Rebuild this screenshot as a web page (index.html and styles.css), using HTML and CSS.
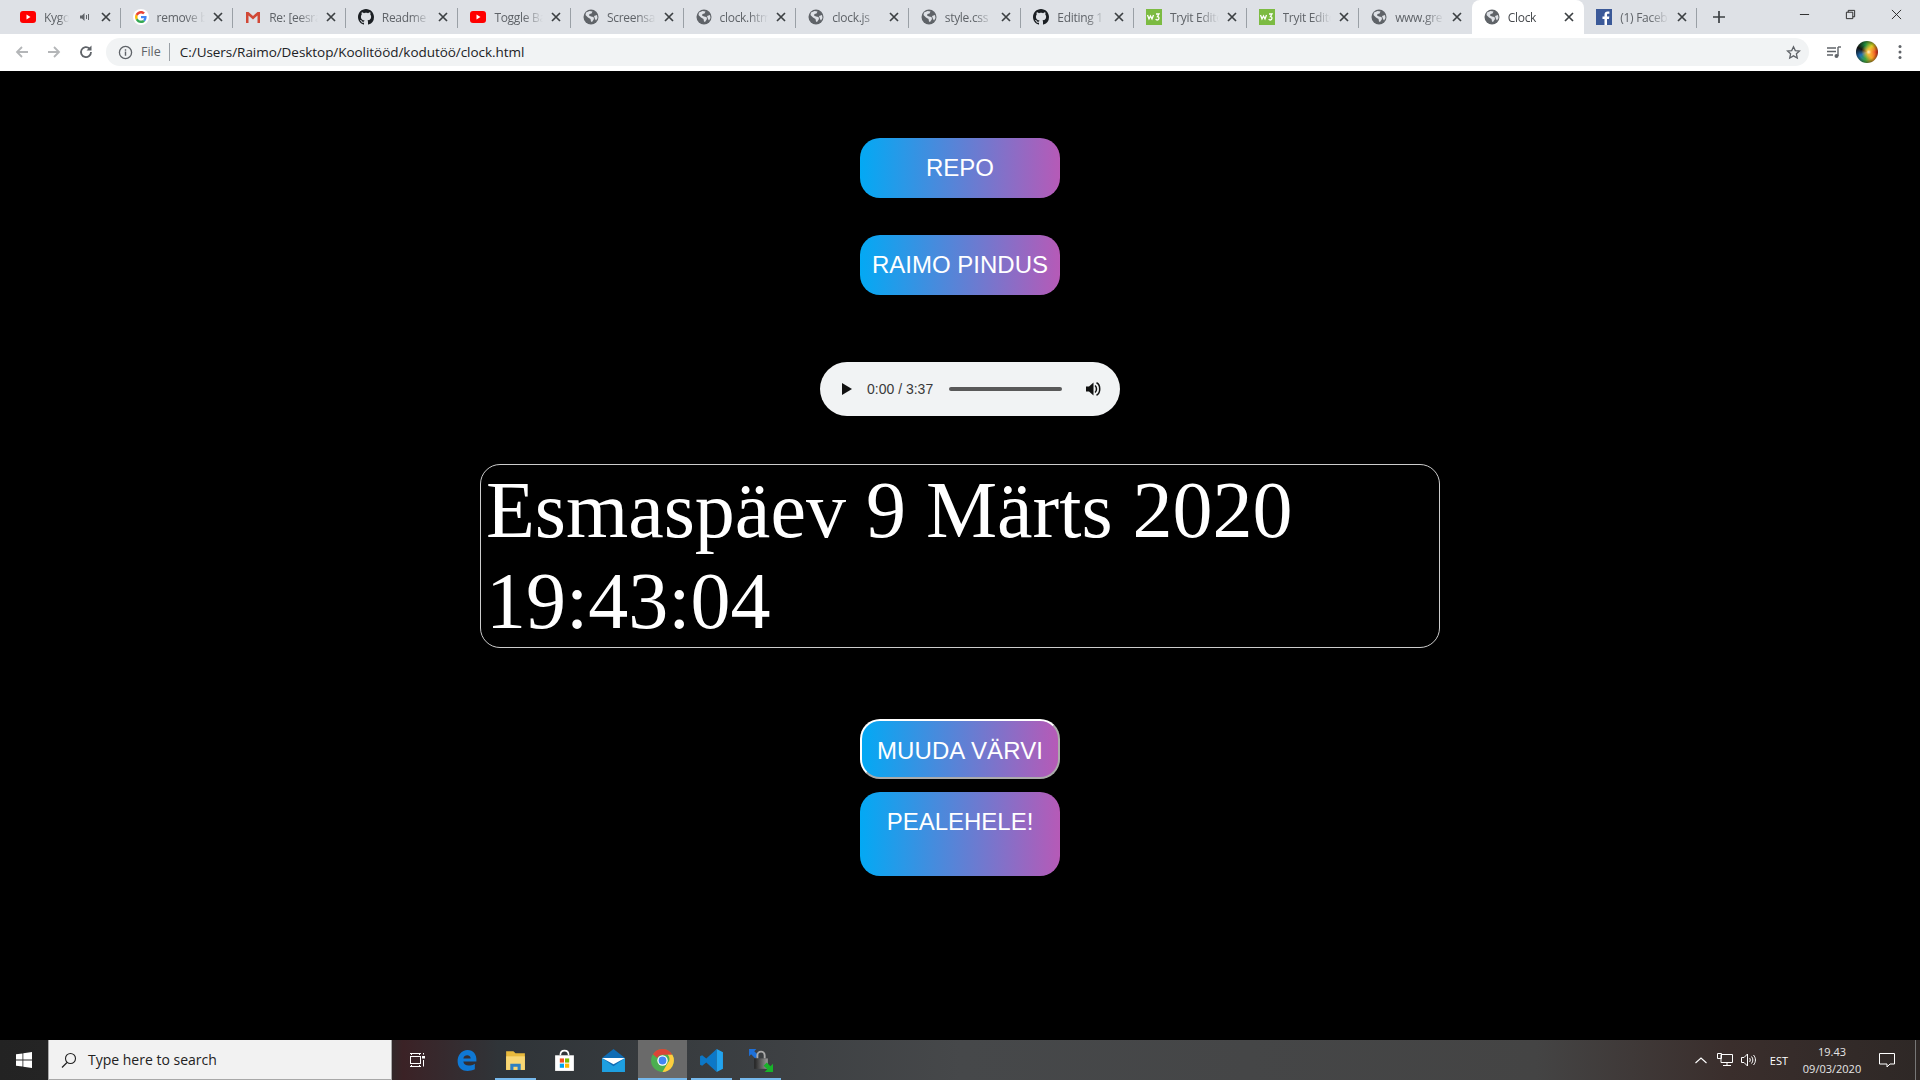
FILE: index.html
```html
<!DOCTYPE html>
<html lang="et">
<head>
    <meta charset="UTF-8">
    <title>Clock</title>
    <link rel="stylesheet" href="styles.css">
</head>
<body>
    <svg class="sprites" width="0" height="0">
        <symbol id="i-yt" viewBox="0 0 16 16"><rect x="0" y="2" width="16" height="12" rx="3" fill="#f00"/><path d="M6.500 5.500v5l4-2.500z" fill="#fff"/></symbol>
        <symbol id="i-gh" viewBox="0 0 16 16"><path fill="#1b1f23" d="M8 0C3.58 0 0 3.58 0 8c0 3.54 2.290 6.530 5.470 7.590.4.070.55-.17.55-.38 0-.19-.01-.82-.01-1.490-2.010.37-2.530-.49-2.690-.94-.09-.23-.48-.94-.82-1.130-.28-.15-.68-.52-.01-.53.63-.01 1.080.58 1.230.82.72 1.210 1.870.87 2.330.66.070-.52.28-.87.51-1.070-1.780-.2-3.640-.89-3.640-3.950 0-.87.31-1.590.82-2.150-.08-.2-.36-1.020.08-2.120 0 0 .67-.21 2.200.82.64-.18 1.320-.27 2-.27.68 0 1.360.09 2 .27 1.530-1.040 2.200-.82 2.200-.82.44 1.100.16 1.920.08 2.120.51.56.82 1.270.82 2.150 0 3.070-1.870 3.750-3.650 3.950.29.25.54.73.54 1.480 0 1.070-.01 1.930-.01 2.200 0 .21.15.46.55.38A8.013 8.013 0 0016 8c0-4.420-3.580-8-8-8z"/></symbol>
        <symbol id="i-globe" viewBox="0 0 16 16"><circle cx="8" cy="8" r="7.500" fill="#5f6368"/><path fill="#dee1e6" d="M3 3.500l3.500-1.500 3 .5-1 2-2 .5-.5 1.500 2 1 2.500.5.5 2-2 3-1-.5-.5-2.500-2.500-1.500-2.500-2.500zM11 7l3-1 .5 3-1.500 2.500-1-1.500z"/></symbol>
        <symbol id="i-g" viewBox="0 0 16 16"><circle cx="8" cy="8" r="8" fill="#fff"/><path fill="#4285f4" d="M13.600 8.100c0-.4 0-.8-.1-1.200H8v2.300h3.200c-.1.700-.6 1.400-1.200 1.800l1.900 1.500c1.100-1 1.700-2.500 1.700-4.400z"/><path fill="#34a853" d="M8 14c1.600 0 2.900-.5 3.900-1.500L10 11c-.5.400-1.200.6-2 .6-1.500 0-2.900-1-3.300-2.400l-2 1.500C3.700 12.700 5.700 14 8 14z"/><path fill="#fbbc05" d="M4.700 9.200c-.3-.8-.3-1.600 0-2.400l-2-1.500c-.9 1.700-.9 3.700 0 5.400z"/><path fill="#ea4335" d="M8 4.400c.9 0 1.600.3 2.200.9l1.700-1.700C10.900 2.600 9.500 2 8 2 5.700 2 3.700 3.300 2.700 5.300l2 1.500C5.100 5.400 6.500 4.400 8 4.400z"/></symbol>
        <symbol id="i-w3" viewBox="0 0 16 16"><rect width="16" height="16" fill="#7cbb42"/><path fill="none" stroke="#fff" stroke-width="1.300" d="M1.500 6l1.500 4 1.500-3 1.500 3 1.500-4M10 5h3l-1.500 2.500c2 0 2 3.500-.2 3.500-.8 0-1.300-.4-1.500-1"/></symbol>
        <symbol id="i-x" viewBox="0 0 10 10"><path d="M1 1l8 8M9 1l-8 8" stroke="#3c4043" stroke-width="1.700" fill="none"/></symbol>
    </svg>

    <header class="browser">
        <div class="tabstrip">
            <div class="tab"><svg class="favicon"><use href="#i-yt"/></svg><span class="tab-title tab-title-short">Kygo</span><svg class="speaker" viewBox="0 0 12 12"><path d="M1 4.500h2l2.500-2.500v8L3 7.500H1z" fill="#5f6368"/><path d="M7.500 4v4M9.500 3v6" stroke="#5f6368"/></svg><svg class="tab-x"><use href="#i-x"/></svg></div>
            <div class="tab"><svg class="favicon"><use href="#i-g"/></svg><span class="tab-title">remove b</span><svg class="tab-x"><use href="#i-x"/></svg></div>
            <div class="tab"><svg class="favicon" viewBox="0 0 16 16"><path d="M1 3h2.500L8 7l4.500-4H15v11h-2.500V6.500L8 10.500 3.500 6.500V14H1z" fill="#d14836"/></svg><span class="tab-title">Re: [eesra</span><svg class="tab-x"><use href="#i-x"/></svg></div>
            <div class="tab"><svg class="favicon"><use href="#i-gh"/></svg><span class="tab-title">Readme s</span><svg class="tab-x"><use href="#i-x"/></svg></div>
            <div class="tab"><svg class="favicon"><use href="#i-yt"/></svg><span class="tab-title">Toggle Ba</span><svg class="tab-x"><use href="#i-x"/></svg></div>
            <div class="tab"><svg class="favicon"><use href="#i-globe"/></svg><span class="tab-title">Screensa</span><svg class="tab-x"><use href="#i-x"/></svg></div>
            <div class="tab"><svg class="favicon"><use href="#i-globe"/></svg><span class="tab-title">clock.htm</span><svg class="tab-x"><use href="#i-x"/></svg></div>
            <div class="tab"><svg class="favicon"><use href="#i-globe"/></svg><span class="tab-title">clock.js</span><svg class="tab-x"><use href="#i-x"/></svg></div>
            <div class="tab"><svg class="favicon"><use href="#i-globe"/></svg><span class="tab-title">style.css</span><svg class="tab-x"><use href="#i-x"/></svg></div>
            <div class="tab"><svg class="favicon"><use href="#i-gh"/></svg><span class="tab-title">Editing 1</span><svg class="tab-x"><use href="#i-x"/></svg></div>
            <div class="tab"><svg class="favicon"><use href="#i-w3"/></svg><span class="tab-title">Tryit Edito</span><svg class="tab-x"><use href="#i-x"/></svg></div>
            <div class="tab"><svg class="favicon"><use href="#i-w3"/></svg><span class="tab-title">Tryit Edito</span><svg class="tab-x"><use href="#i-x"/></svg></div>
            <div class="tab tab-before-active"><svg class="favicon"><use href="#i-globe"/></svg><span class="tab-title">www.gre</span><svg class="tab-x"><use href="#i-x"/></svg></div>
            <div class="tab tab-active"><svg class="favicon"><use href="#i-globe"/></svg><span class="tab-title">Clock</span><svg class="tab-x"><use href="#i-x"/></svg></div>
            <div class="tab"><svg class="favicon" viewBox="0 0 16 16"><rect width="16" height="16" fill="#3b5998"/><path fill="#fff" d="M11 16v-6h2l.3-2.500H11V6c0-.7.2-1.200 1.200-1.200h1.200V2.600c-.2 0-1-.1-1.800-.1-1.800 0-3.100 1.100-3.100 3.200v1.800h-2V10h2v6z"/></svg><span class="tab-title">(1) Faceb</span><svg class="tab-x"><use href="#i-x"/></svg></div>
            <svg class="newtab" viewBox="0 0 12 12"><path d="M6 0v12M0 6h12" stroke="#3c4043" stroke-width="1.700"/></svg>
            <div class="window-btns">
                <svg viewBox="0 0 12 12"><path d="M1 6h10" stroke="#222"/></svg>
                <svg viewBox="0 0 12 12"><path d="M1.500 3.500h7v7h-7zM3.500 3.500v-2h7v7h-2" stroke="#222" fill="none"/></svg>
                <svg viewBox="0 0 12 12"><path d="M1 1l10 10M11 1L1 11" stroke="#222"/></svg>
            </div>
        </div>
        <div class="toolbar">
            <svg class="nav-icon" viewBox="0 0 16 16"><path d="M14 8H3M8 3L3 8l5 5" fill="none" stroke="#b4b6b8" stroke-width="1.800"/></svg>
            <svg class="nav-icon" viewBox="0 0 16 16"><path d="M2 8h11M8 3l5 5-5 5" fill="none" stroke="#b4b6b8" stroke-width="1.800"/></svg>
            <svg class="nav-icon" viewBox="0 0 16 16"><path d="M13 8a5 5 0 1 1-1.500-3.500" fill="none" stroke="#5f6368" stroke-width="1.800"/><path d="M13.500 1.500v5h-5z" fill="#5f6368"/></svg>
            <div class="omnibox">
                <svg class="info" viewBox="0 0 16 16"><circle cx="8" cy="8" r="6.500" fill="none" stroke="#5f6368" stroke-width="1.400"/><path d="M8 7v4.500M8 4.500v1.500" stroke="#5f6368" stroke-width="1.500"/></svg>
                <span class="scheme">File</span>
                <span class="url">C:/Users/Raimo/Desktop/Koolitööd/kodutöö/clock.html</span>
                <svg class="star" viewBox="0 0 16 16"><path d="M8 1.800l1.900 4.100 4.500.5-3.300 3 .9 4.500L8 11.600l-4 2.300.9-4.500-3.300-3 4.500-.5z" fill="none" stroke="#5f6368" stroke-width="1.400"/></svg>
            </div>
            <svg class="media" viewBox="0 0 16 16"><path d="M1 4h9M1 7.500h9M1 11h6" stroke="#5f6368" stroke-width="1.300"/><path d="M12 3v9" stroke="#5f6368" stroke-width="1.400"/><path d="M12 3h3" stroke="#5f6368" stroke-width="1.400"/><circle cx="10.500" cy="12" r="2" fill="#5f6368"/></svg>
            <div class="avatar"></div>
            <svg class="menu" viewBox="0 0 4 16"><circle cx="2" cy="2.500" r="1.500" fill="#5f6368"/><circle cx="2" cy="8" r="1.500" fill="#5f6368"/><circle cx="2" cy="13.500" r="1.500" fill="#5f6368"/></svg>
        </div>
    </header>

    <main class="page">
        <a class="btn btn-repo" href="#">REPO</a>
        <a class="btn btn-name" href="#">RAIMO PINDUS</a>

        <div class="player">
            <svg class="play" viewBox="0 0 10 12"><path d="M0 0l10 6-10 6z" fill="#111"/></svg>
            <span class="player-time">0:00 / 3:37</span>
            <div class="player-track"></div>
            <svg class="player-vol" viewBox="0 0 16 16"><path d="M0 5.500h3L7.500 1.500v13L3 10.500H0z" fill="#111"/><path d="M9 4.500c2 1.500 2 5.500 0 7" fill="none" stroke="#111" stroke-width="1.500"/><path d="M10.500 1.800c4.300 2 4.300 10.400 0 12.400" fill="none" stroke="#111" stroke-width="1.500"/></svg>
        </div>

        <div class="clock">Esmaspäev 9 Märts 2020<br>19:43:04</div>

        <button class="btn btn-color" type="button">MUUDA VÄRVI</button>
        <a class="btn btn-home" href="#">PEALEHELE!</a>
    </main>

    <footer class="taskbar">
        <svg class="start" viewBox="0 0 16 16"><path fill="#fff" d="M0 2.300l6.500-.9v6.200H0zM7.300 1.300L16 0v7.600H7.300zM0 8.400h6.500v6.200L0 13.700zM7.300 8.400H16V16l-8.700-1.200z"/></svg>
        <div class="search">
            <svg viewBox="0 0 16 16"><circle cx="9.500" cy="6.500" r="5" fill="none" stroke="#222" stroke-width="1.100"/><path d="M6 10.500L1 15.500" stroke="#222" stroke-width="1.200"/></svg>
            <span>Type here to search</span>
        </div>
        <div class="task-icons">
            <div class="task-item task-view"><svg viewBox="0 0 16 16"><path d="M1 1.500h11M1 14.500h11M2.500 1.500V3M10.500 1.500V3M2.500 13v1.500M10.500 13v1.500M14.500 1v1.500M14.500 8v6.500" fill="none" stroke="#fff"/><rect x="1.500" y="4.500" width="10" height="7" fill="none" stroke="#fff"/><rect x="13" y="4" width="3" height="2.500" fill="#fff"/></svg></div>
            <div class="task-item"><svg class="big" viewBox="0 0 24 24"><path fill="#0f78d4" d="M3.500 13.500C3 7 7.500 2 13 2c5.500 0 9 4 8.500 11H9c.2 3.700 5.500 5.500 11 2v5.500c-7.500 3.500-16 1.500-16.500-7zM9 10h7c0-4-6.500-4-7 0z"/></svg></div>
            <div class="task-item task-open"><svg class="big" viewBox="0 0 24 24"><path fill="#e8b93c" d="M3 3h7l2 2h9v16H3z"/><path fill="#f8d775" d="M3 8h18v13H3z"/><path fill="#2d7fc1" d="M7 15h10v6h-3v-3h-4v3H7z"/></svg></div>
            <div class="task-item"><svg class="big" viewBox="0 0 24 24"><path fill="#fff" d="M3 7h18v15H3z"/><path d="M8 7c0-6 8-6 8 0" fill="none" stroke="#fff" stroke-width="1.500"/><path fill="#f25022" d="M7.500 10H11.500v4H7.500z"/><path fill="#7fba00" d="M12.500 10H16.500v4H12.500z"/><path fill="#00a4ef" d="M7.500 15H11.500v4H7.500z"/><path fill="#ffb900" d="M12.500 15H16.500v4H12.500z"/></svg></div>
            <div class="task-item"><svg class="big" viewBox="0 0 24 24"><path fill="#0f6cb4" d="M12 1l11 8.500v13.500H1V9.500z"/><path fill="#1e9fe0" d="M1 9.500l11 8 11-8V23H1z"/><path fill="#fff" d="M1 9.500h22l-11 6z"/></svg></div>
            <div class="task-item task-active"><svg class="big" viewBox="0 0 48 48"><circle cx="24" cy="24" r="22" fill="#4caf50"/><path fill="#db4437" d="M24 2a22 22 0 0 1 19 11H24a11 11 0 0 0-10 6L5.500 12A22 22 0 0 1 24 2z"/><path fill="#ffcd40" d="M43 13a22 22 0 0 1-19 33l10-17a11 11 0 0 0 0-16z"/><circle cx="24" cy="24" r="10" fill="#fff"/><circle cx="24" cy="24" r="7.500" fill="#4285f4"/></svg></div>
            <div class="task-item task-open"><svg class="big" viewBox="0 0 24 24"><path fill="#0c78c8" d="M17 1L7 10 3 7 1 8v8l2 1 4-3 10 9zM17 7l-6 5 6 5z"/><path fill="#22a3ee" d="M17 1l6 3v16l-6 3z"/></svg></div>
            <div class="task-item task-open"><svg class="big" viewBox="0 0 24 24"><defs><linearGradient id="lock-body" x1="0" y1="0" x2="1" y2="0"><stop offset="0" stop-color="#222"/><stop offset="1" stop-color="#999"/></linearGradient></defs><path fill="#1e70d8" d="M1 1h7L6 3l4 4-3 3-4-4-2 2z"/><path d="M9 10V7a3.500 3.500 0 0 1 7 0v3" fill="none" stroke="#aaa" stroke-width="1.800"/><rect x="6" y="10" width="13" height="10" fill="url(#lock-body)"/><path fill="#18b32a" d="M24 23h-8l2.500-2.500-3.500-3.500 3-3 3.500 3.500L24 15z"/></svg></div>
        </div>
        <div class="tray">
            <svg class="tray-chev" viewBox="0 0 12 7"><path d="M.5 6L6 1l5.500 5" fill="none" stroke="#fff" stroke-width="1.100"/></svg>
            <svg class="tray-net" viewBox="0 0 16 14"><path d="M4 1.500h11.500v8H4zM10 9.500v3M6 12.500h8M.5 .5h4v5h-4z" fill="#3a302e" stroke="#fff"/></svg>
            <svg class="tray-vol" viewBox="0 0 16 14"><path d="M.5 4.500h2.500L6.500 1v12L3 9.500H.5z" fill="none" stroke="#fff"/><path d="M8.500 5c1 1 1 3 0 4M10.500 3.500c1.800 2 1.800 5 0 7M12.500 2c2.600 3 2.600 7 0 10" fill="none" stroke="#fff"/></svg>
            <span class="tray-lang">EST</span>
            <div class="tray-clock"><span>19.43</span><span>09/03/2020</span></div>
            <svg class="tray-msg" viewBox="0 0 16 15"><path d="M.5 .5h15v10.500h-4.500l-3 3v-3H.5z" fill="none" stroke="#fff"/></svg>
            <div class="tray-show"></div>
        </div>
    </footer>
</body>
</html>
```

FILE: styles.css
```css
* {
    box-sizing: border-box;
}

html, body {
    height: 100%;
}

body {
    margin: 0;
    height: 1080px;
    overflow: hidden;
    display: flex;
    flex-direction: column;
    background-color: #000;
    font-family: "Liberation Sans", Arial, sans-serif;
}

.sprites {
    position: absolute;
}

/* browser chrome */
.browser {
    height: 71px;
    flex-shrink: 0;
    background-color: #fff;
}

.tabstrip {
    height: 34px;
    display: flex;
    align-items: center;
    padding-left: 8px;
    background-color: #dee1e6;
    font-family: "Open Sans", sans-serif;
}

.tab {
    position: relative;
    width: 112.6px;
    height: 34px;
    flex-shrink: 0;
    display: flex;
    align-items: center;
    padding: 0 10px 0 12px;
    color: #5f6368;
    font-size: 12px;
}

.tab::after {
    content: "";
    position: absolute;
    right: 0;
    top: 8px;
    width: 1px;
    height: 20px;
    background-color: #9aa0a6;
}

.tab-before-active::after,
.tab-active::after {
    display: none;
}

.tab-active {
    background-color: #fff;
    border-radius: 8px 8px 0 0;
    color: #45484c;
}

.favicon {
    width: 16px;
    height: 16px;
    flex-shrink: 0;
    margin-right: 8px;
}

.tab-title {
    flex: 1;
    min-width: 0;
    overflow: hidden;
    white-space: nowrap;
    letter-spacing: -0.3px;
    -webkit-mask-image: linear-gradient(90deg, #000 60%, transparent);
    mask-image: linear-gradient(90deg, #000 60%, transparent);
}

.tab-title-short {
    flex: 0 0 25px;
}

.speaker {
    width: 12px;
    height: 12px;
    margin-left: 10px;
    margin-right: auto;
}

.tab-x {
    width: 10px;
    height: 10px;
    flex-shrink: 0;
    margin-left: 8px;
}

.newtab {
    width: 12px;
    height: 12px;
    margin-left: 16px;
}

.window-btns {
    margin-left: auto;
    display: flex;
    gap: 35px;
    align-items: center;
    padding: 0 18px 6px 0;
}

.window-btns svg {
    width: 11px;
    height: 11px;
}

.toolbar {
    height: 37px;
    display: flex;
    align-items: center;
    padding: 0 0 1px 14px;
    background-color: #fff;
}

.nav-icon {
    width: 16px;
    height: 16px;
    margin-right: 16px;
}

.omnibox {
    width: 1703px;
    height: 28px;
    margin-left: -4px;
    padding: 0 8px 0 12px;
    display: flex;
    align-items: center;
    background-color: #f1f3f4;
    border-radius: 14px;
    font-family: "Open Sans", sans-serif;
    font-size: 12.5px;
}

.info {
    width: 15px;
    height: 15px;
    margin-right: 8px;
}

.scheme {
    color: #5f6368;
    padding-right: 8px;
    border-right: 1px solid #9aa0a6;
    line-height: 18px;
    margin-right: 10px;
}

.url {
    color: #202124;
    font-size: 13.5px;
    letter-spacing: -0.05px;
}

.star {
    width: 15px;
    height: 15px;
    margin-left: auto;
}

.media {
    width: 16px;
    height: 16px;
    margin-left: 17px;
}

.avatar {
    width: 22px;
    height: 22px;
    margin-left: 14px;
    border-radius: 50%;
    background:
        radial-gradient(circle at 58% 50%, #fff6c0 0, rgba(255, 190, 60, .8) 15%, transparent 45%),
        radial-gradient(circle, transparent 50%, #0a0a0a 100%),
        conic-gradient(from 90deg, #e8331e, #f4a020, #3aa83e, #1e6fb5, #111, #1e8e3e, #d4d020, #e8331e);
}

.menu {
    width: 4px;
    height: 16px;
    margin-left: 20px;
}

/* page content */
.page {
    flex: 1;
    display: flex;
    flex-direction: column;
    align-items: center;
    padding-top: 67px;
}

.btn {
    display: block;
    width: 200px;
    height: 60px;
    border: none;
    border-radius: 20px;
    background-image: linear-gradient(90deg, #03a9f4, #b65ab7);
    color: #fff;
    font-family: "Liberation Sans", Arial, sans-serif;
    font-size: 24px;
    text-align: center;
    text-decoration: none;
    line-height: 60px;
}

.btn-name {
    margin-top: 37px;
}

.player {
    width: 300px;
    height: 54px;
    margin-top: 67px;
    margin-left: 20px;
    padding: 0 18px 0 22px;
    display: flex;
    align-items: center;
    border-radius: 27px;
    background-color: #f1f3f4;
}

.play {
    width: 10px;
    height: 12px;
}

.player-time {
    margin-left: 15px;
    color: #3a3a3a;
    font-size: 14px;
    white-space: nowrap;
}

.player-track {
    width: 113px;
    height: 4px;
    margin-left: 16px;
    border-radius: 2px;
    background-color: #595959;
}

.player-vol {
    width: 16px;
    height: 16px;
    margin-left: auto;
}

.clock {
    width: 960px;
    height: 184px;
    margin-top: 48px;
    padding: 0 5px;
    border: 1px solid #ccc;
    border-radius: 20px;
    color: #fff;
    font-family: "Liberation Serif", "Times New Roman", serif;
    font-size: 80px;
    line-height: 91px;
}

.btn-color {
    margin-top: 71px;
    padding: 2px 0 0;
    border: 2px outset #fff;
    line-height: 56px;
    letter-spacing: .1px;
}

.btn-home {
    height: 84px;
    margin-top: 13px;
    line-height: 59px;
}

/* windows taskbar */
.taskbar {
    height: 40px;
    flex-shrink: 0;
    display: flex;
    align-items: stretch;
    background: linear-gradient(90deg, #232323 0, #2b2b2b 20%, #3b2226 21%, #2f3438 26%, #46484a 50%, #444 80%, #3a2e2c 90%, #2e2826 100%);
    font-family: "Open Sans", sans-serif;
}

.start {
    width: 16px;
    height: 16px;
    margin: 12px 16px 0 16px;
}

.search {
    width: 344px;
    display: flex;
    align-items: center;
    padding-left: 12px;
    background-color: #f2f2f2;
    border: 1px solid #a8a8a8;
    border-width: 0 1px 1px 1px;
    color: #222;
    font-size: 14px;
}

.search svg {
    width: 16px;
    height: 16px;
    margin-right: 11px;
}

.task-icons {
    display: flex;
}

.task-item {
    position: relative;
    width: 49px;
    display: flex;
    align-items: center;
    justify-content: center;
}

.task-view {
    width: 50px;
}

.task-item svg {
    width: 16px;
    height: 16px;
}

.task-item svg.big {
    width: 25px;
    height: 25px;
}

.task-open::after,
.task-active::after {
    content: "";
    position: absolute;
    left: 4px;
    right: 4px;
    bottom: 0;
    height: 2px;
    background-color: #76b9ed;
}

.task-active {
    background-color: #6a6a6a;
}

.task-active::after {
    left: 0;
    right: 0;
}

.tray {
    margin-left: auto;
    display: flex;
    align-items: center;
    color: #fff;
    font-size: 12px;
}

.tray-chev {
    width: 12px;
    height: 7px;
}

.tray-net {
    width: 16px;
    height: 14px;
    margin-left: 10px;
}

.tray-vol {
    width: 16px;
    height: 14px;
    margin-left: 8px;
}

.tray-lang {
    margin-left: 13px;
    font-size: 11px;
}

.tray-clock {
    width: 78px;
    margin-left: 5px;
    display: flex;
    flex-direction: column;
    align-items: center;
    line-height: 17px;
    font-size: 11px;
    color: #e6e6e6;
}

.tray-msg {
    width: 16px;
    height: 15px;
    margin-left: 8px;
}

.tray-show {
    width: 1px;
    height: 100%;
    margin-left: 20px;
    margin-right: 4px;
    background-color: #777;
}
```
